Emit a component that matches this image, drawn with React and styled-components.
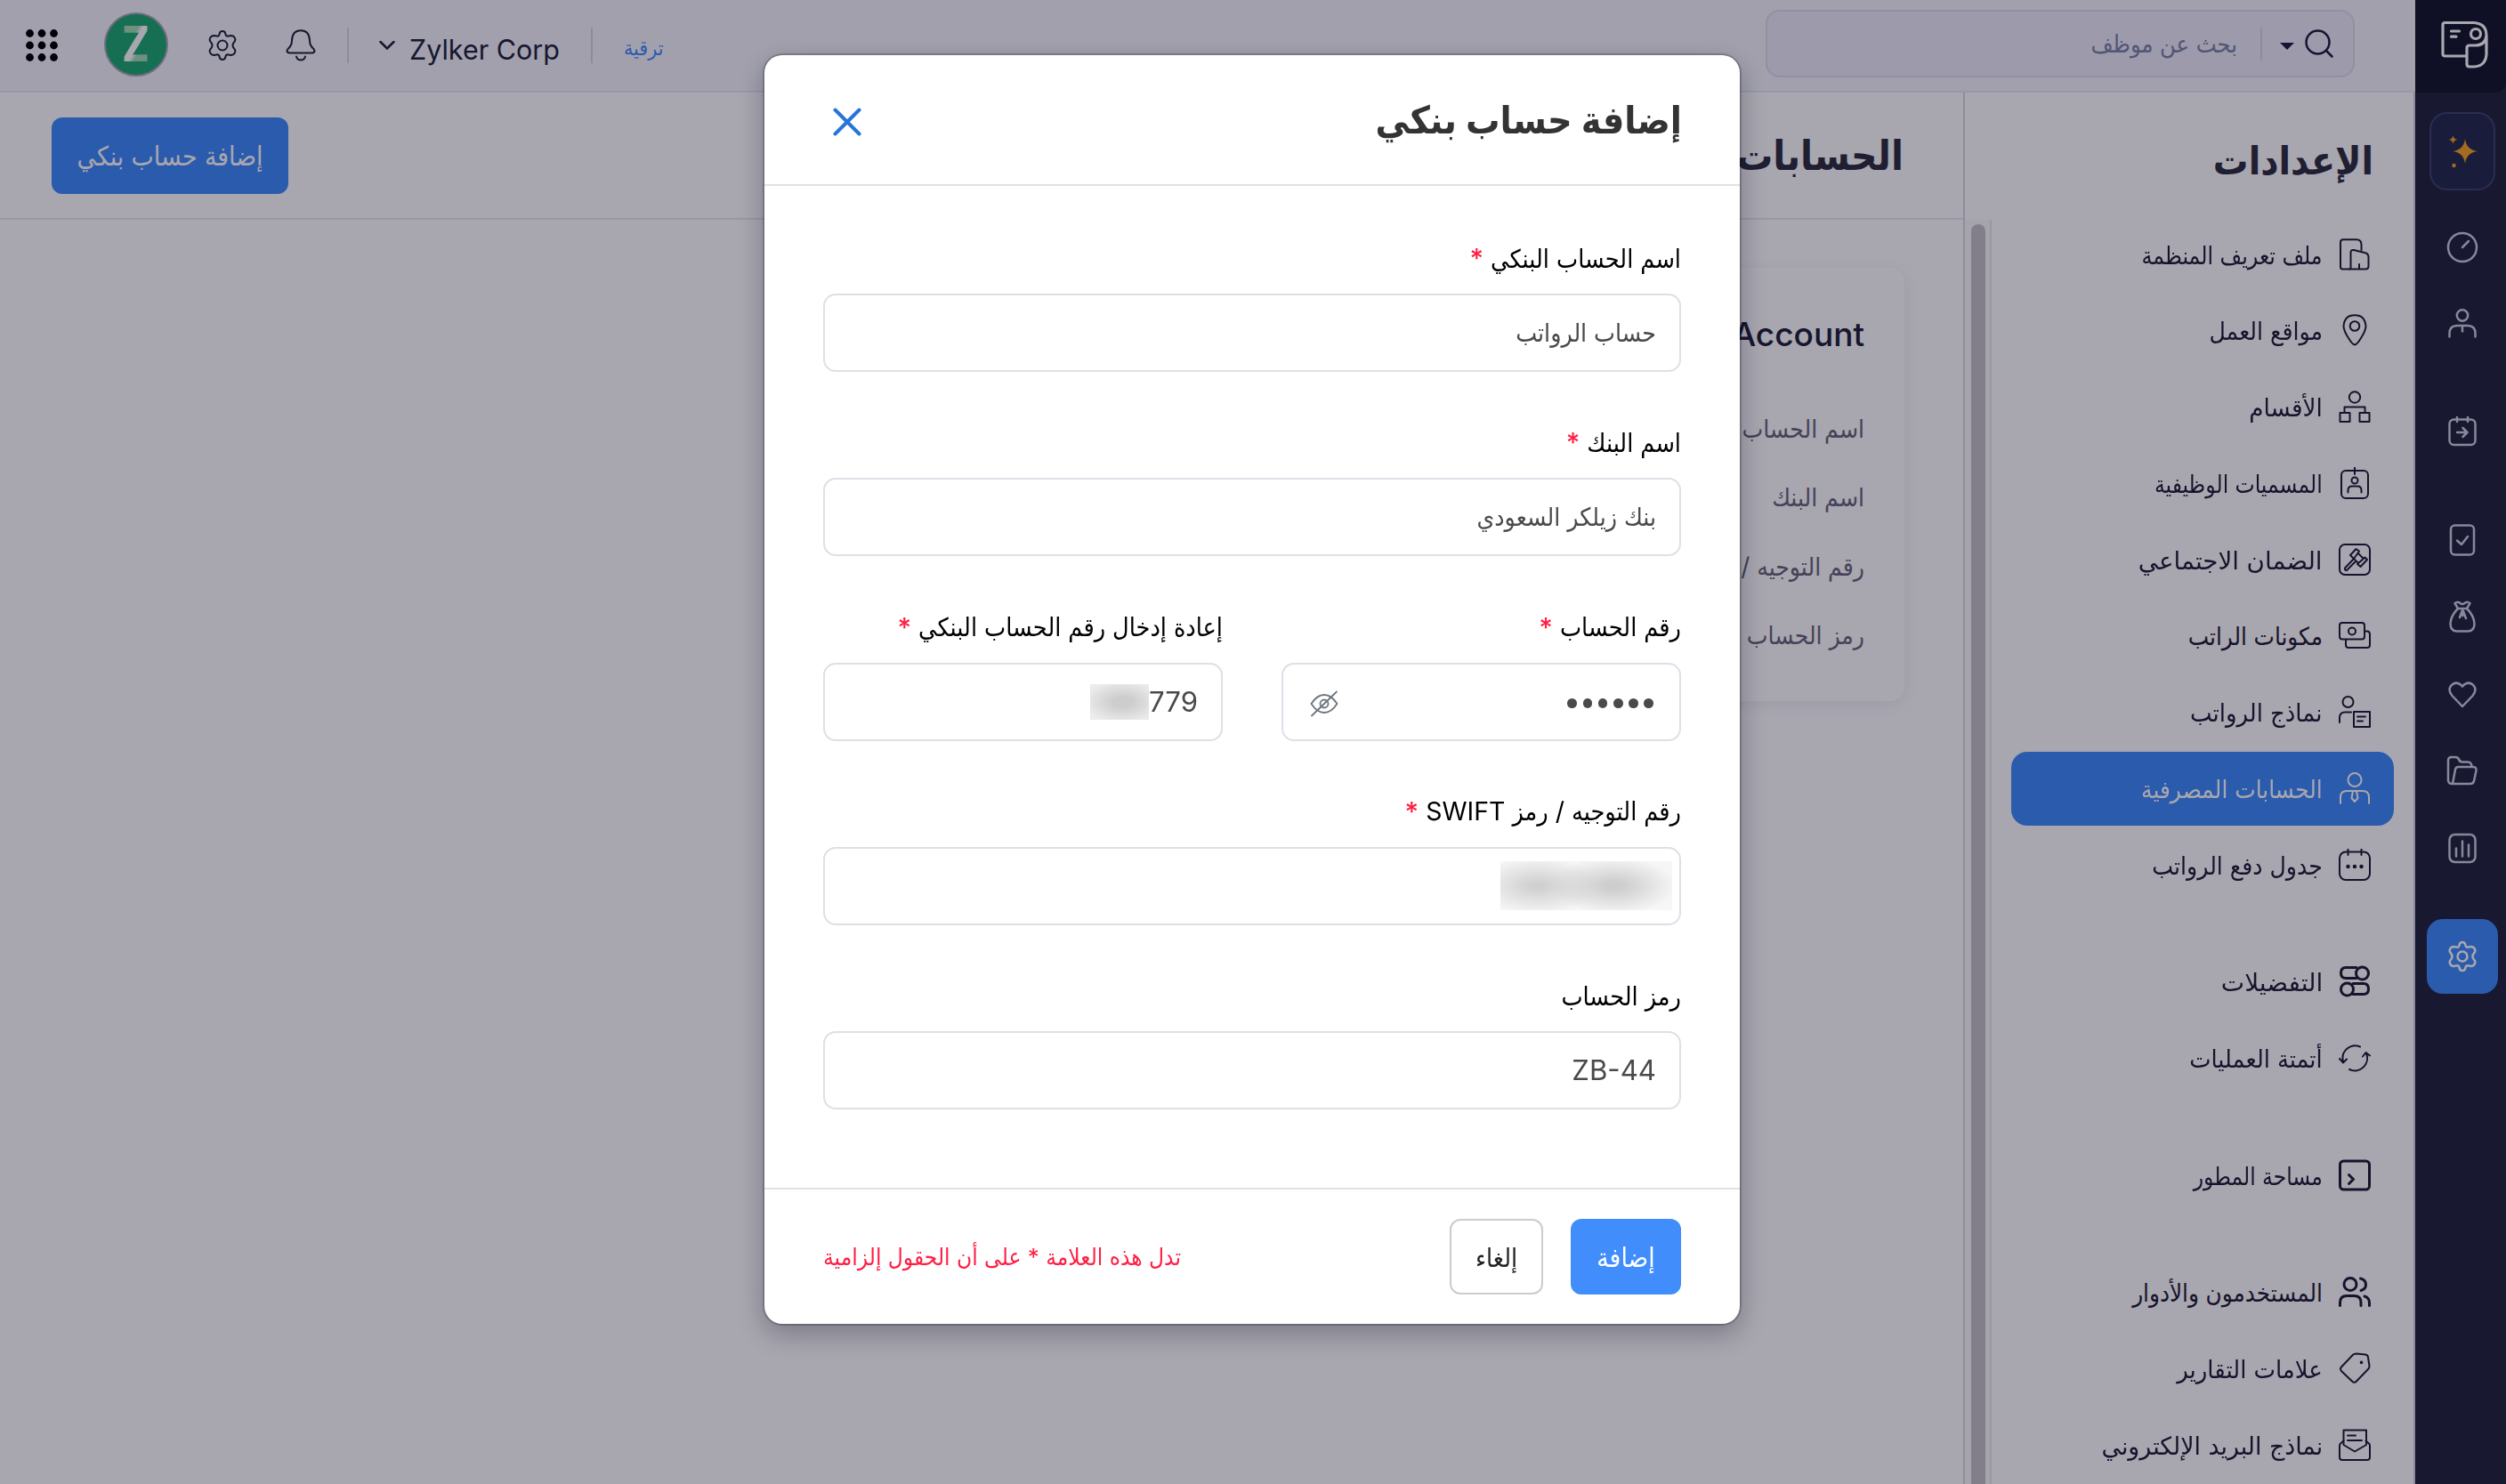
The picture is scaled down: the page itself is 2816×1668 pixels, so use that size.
import styled, { createGlobalStyle, css } from 'styled-components';

const GlobalStyle = createGlobalStyle`
  * { box-sizing: border-box; }
  body {
    margin: 0;
    overflow: hidden;
    font-family: Inter, "DejaVu Sans Condensed", "DejaVu Sans", sans-serif;
    font-size: 26px;
    color: #21232f;
    background: #fff;
  }
  svg { display: block; flex: none; }
`;

const Shell = styled.div`
  display: flex;
  direction: rtl;
  width: 100%;
  height: 1668px;
  overflow: hidden;
`;

/* ---------- dark rail on the right ---------- */

const Rail = styled.nav`
  flex: none;
  width: 102px;
  display: flex;
  flex-direction: column;
  align-items: center;
  background: #22253c;
  color: #cdd2e2;
`;

const RailLogo = styled.div`
  width: 102px;
  height: 104px;
  padding: 23px 18px 0 0;
  background: #151a2c;
  border-bottom-right-radius: 12px;
  color: #fff;
`;

const SparkTile = styled.div`
  display: flex;
  align-items: center;
  justify-content: center;
  width: 74px;
  height: 88px;
  margin: 22px 0 22px 4px;
  border: 2px solid #3f4670;
  border-radius: 20px;
  background: #262b4d;
`;

const RailItem = styled.div`
  display: flex;
  align-items: center;
  justify-content: center;
  width: 80px;
  height: 84px;
  margin-left: 4px;
  margin-top: ${p => p.$gap || 0}px;
  border-radius: 18px;
  ${p => p.$active && css`
    background: #408dfb;
    color: #fff;
  `}
`;

/* ---------- top bar ---------- */

const Main = styled.div`
  flex: 1;
  min-width: 0;
  display: flex;
  flex-direction: column;
`;

const TopBar = styled.header`
  flex: none;
  display: flex;
  justify-content: space-between;
  height: 104px;
  padding: 11px 68px 0 0;
  background: #f6f6fc;
  border-bottom: 2px solid #e8e8f1;
`;

const Search = styled.div`
  display: flex;
  align-items: center;
  width: 662px;
  height: 76px;
  padding-right: 22px;
  border: 2px solid #dddcea;
  border-radius: 16px;
  background: #eeedf9;
  color: #7c84a6;
  font-size: 27px;
`;

const Caret = styled.span`
  margin: 6px 12px 0 20px;
  border: 8px solid transparent;
  border-top: 8px solid #1d2140;
  border-bottom: 0;
`;

const Divider = styled.span`
  width: 2px;
  height: ${p => p.$h || 40}px;
  margin: 0 ${p => p.$r || 0}px 0 ${p => p.$l || 0}px;
  background: #d8d6e3;
`;

const TopTools = styled.div`
  direction: ltr;
  display: flex;
  align-items: center;
  height: 79px;
  padding-left: 29px;
  color: #21263c;
`;

const Avatar = styled.div`
  display: flex;
  align-items: center;
  justify-content: center;
  width: 72px;
  height: 72px;
  margin: -2px 43px 0 52px;
  border: 2px solid #a9a9b4;
  border-radius: 50%;
  background: #1fab70;
`;

const AvatarLetter = styled.span`
  font-size: 55px;
  font-weight: 800;
  line-height: 55px;
  transform: scaleX(0.82);
  color: transparent;
  background: linear-gradient(128deg, #a5ddb6 36%, #ffffff 44%, #ffffff 57%, #a5ddb6 64%);
  background-clip: text;
`;

const Bell = styled.span`
  margin: 0 34px 0 52px;
`;

const OrgName = styled.span`
  width: 168px;
  margin: 10px 36px 0 16px;
  font-size: 30.5px;
  white-space: nowrap;
`;

const Upgrade = styled.a`
  margin: 6px 0 0 35px;
  color: #408dfb;
  font-size: 23px;
`;

/* ---------- settings column ---------- */

const Columns = styled.div`
  flex: 1;
  min-height: 0;
  display: flex;
`;

const Settings = styled.aside`
  flex: none;
  display: flex;
  flex-direction: column;
  width: 508px;
  border-left: 2px solid #dadae3;
  border-right: 2px solid #d4d4de;
`;

const SettingsTitle = styled.h2`
  display: flex;
  align-items: center;
  height: 140px;
  margin: 0;
  padding: 12px 45px 0 0;
  font-size: 44px;
  font-weight: 700;
  color: #2e3040;
`;

const SettingsBody = styled.div`
  flex: 1;
  min-height: 0;
  display: flex;
  justify-content: space-between;
`;

const MenuList = styled.div`
  display: flex;
  flex-direction: column;
  gap: 48.5px;
  width: 430px;
  margin-right: 22px;
`;

const MenuGroup = styled.div`
  display: flex;
  flex-direction: column;
  gap: 2.8px;
  flex: none;
`;

const MenuItem = styled.div`
  display: flex;
  align-items: center;
  gap: 18px;
  height: 83px;
  padding-right: 26px;
  border-radius: 18px;
  font-size: 27.5px;
  white-space: nowrap;
  color: #1f2036;
  ${p => p.$active && css`
    background: #408dfb;
    color: #fff;
  `}
`;

const MenuText = styled.span`
  padding-top: 2px;
  transform: scaleX(${p => p.$stretch});
  transform-origin: right center;
`;

const ScrollTrack = styled.div`
  width: 30px;
  margin-top: 3px;
  padding: 5px 5px 0 7px;
  background: #fafafa;
  border-right: 2px solid #e8e8ec;
`;

const ScrollThumb = styled.div`
  height: 1500px;
  border-radius: 9px;
  background: #c5c4c8;
`;

/* ---------- page content ---------- */

const Content = styled.main`
  flex: 1;
  min-width: 0;
`;

const ContentHeader = styled.div`
  display: flex;
  align-items: center;
  justify-content: space-between;
  height: 143px;
  padding: 0 67px 0 58px;
  border-bottom: 2px solid #e8e8ee;
`;

const PageTitle = styled.h1`
  margin: 0;
  font-size: 45.5px;
  font-weight: 700;
  color: #2e3040;
`;

const BlueButton = styled.button`
  display: flex;
  align-items: center;
  justify-content: center;
  width: ${p => p.$w}px;
  height: ${p => p.$h}px;
  padding: 1px 0 0;
  border: 0;
  border-radius: 12px;
  background: #408dfb;
  color: #fff;
  font-family: inherit;
  font-size: 29.8px;
`;

const Card = styled.section`
  width: 1100px;
  height: 487px;
  margin: 54px 66px 0 0;
  padding: 49px 45px 0 0;
  border-radius: 16px;
  box-shadow: 0 4px 18px rgba(30, 20, 90, 0.08);
`;

const CardTitle = styled.h3`
  margin: 0 0 42px;
  direction: ltr;
  text-align: right;
  font-size: 37px;
  line-height: 52px;
  font-weight: 500;
  color: #21223a;
`;

const CardLabel = styled.div`
  height: 77.3px;
  line-height: 77.3px;
  font-size: 28px;
  color: #68687a;
`;

/* ---------- modal ---------- */

const Overlay = styled.div`
  position: fixed;
  inset: 0;
  display: flex;
  justify-content: center;
  align-items: flex-start;
  padding: 62px 2px 0 0;
  direction: rtl;
  background: rgba(6, 1, 26, 0.35);
`;

const Modal = styled.div`
  width: 1096px;
  height: 1426px;
  display: flex;
  flex-direction: column;
  border-radius: 20px;
  background: #fff;
  box-shadow: 0 0 0 2px rgba(0, 0, 0, 0.2), 0 10px 30px rgba(10, 5, 30, 0.3);
`;

const ModalHeader = styled.div`
  display: flex;
  align-items: center;
  justify-content: space-between;
  height: 147px;
  padding: 0 65px 0 77px;
  border-bottom: 2px solid #dee2e6;
`;

const ModalTitle = styled.h2`
  margin: 0;
  font-size: 42.7px;
  font-weight: 700;
  color: #333;
`;

const CloseButton = styled.span`
  margin-top: 4px;
`;

const ModalBody = styled.div`
  flex: 1;
  display: flex;
  flex-direction: column;
  gap: 59.3px;
  padding: 61px 66px 0;
`;

const FieldRow = styled.div`
  display: grid;
  grid-template-columns: 1fr 1fr;
  gap: 66px;
`;

const FieldBox = styled.div`
  display: flex;
  flex-direction: column;
  gap: 20px;
`;

const Label = styled.label`
  display: flex;
  align-items: center;
  gap: 8px;
  height: 40px;
  font-size: 28.5px;
  color: #000;
  white-space: nowrap;
`;

const Star = styled.span`
  color: #ff1f44;
  font-size: 30px;
  font-weight: 500;
`;

const Input = styled.div`
  display: flex;
  align-items: center;
  height: 88px;
  padding: 0 26px;
  border: 2px solid #dfdfe7;
  border-radius: 14px;
  color: #4a4a4a;
  font-size: ${p => (p.$latin ? 31.2 : 28.2)}px;
`;

const Dots = styled.div`
  display: flex;
  gap: 6.6px;
  margin: 4px 3px 0 auto;
  span {
    width: 10.6px;
    height: 10.6px;
    border-radius: 50%;
    background: #4a4a4a;
  }
`;

const EyeToggle = styled.span`
  margin: 4px 0 0 4px;
`;

const Redacted = styled.span`
  width: ${p => p.$w}px;
  height: ${p => p.$h}px;
  margin-right: ${p => p.$mr || 0}px;
  background: ${p => p.$bg};
`;

const ModalFooter = styled.div`
  display: flex;
  align-items: center;
  gap: 31px;
  height: 153px;
  padding: 0 66px 0 66px;
  border-top: 2px solid #dee2e6;
`;

const CancelButton = styled.button`
  width: 105px;
  height: 85px;
  padding: 1px 0 0;
  border: 2px solid #ccc;
  border-radius: 12px;
  background: #fff;
  color: #222;
  font-family: inherit;
  font-size: 28.5px;
`;

const RequiredNote = styled.span`
  margin-right: auto;
  color: #ff1f44;
  font-size: 26.1px;
`;

/* ---------- icons ---------- */

const GEAR = 'M14.6 5.2 Q15 2 18 2 Q21 2 21.4 5.2 Q22 8 24.6 7.6 L27.5 7 Q30.5 7 31.8 9.6 Q33.2 12.4 31 14.4 Q28 18 31 21.6 Q33.2 23.6 31.8 26.4 Q30.5 29 27.5 29 L24.6 28.4 Q22 28 21.4 30.8 Q21 34 18 34 Q15 34 14.6 30.8 Q14 28 11.4 28.4 L8.5 29 Q5.5 29 4.2 26.4 Q2.8 23.6 5 21.6 Q8 18 5 14.4 Q2.8 12.4 4.2 9.6 Q5.5 7 8.5 7 L11.4 7.6 Q14 8 14.6 5.2Z';

const icons = {
  gear: <><path d={GEAR} /><circle cx="18" cy="18" r="5.5" /></>,
  bell: <><path d="M5 26.5 Q1 25.5 3.500 22 Q8 18.500 8 12.5 Q8.500 1.200 18 1.200 Q27.500 1.200 28 12.5 Q28 18.500 32.500 22 Q35 25.500 31 26.500Z" /><path d="M13 30.500 Q14 34.500 18 34.500 Q22 34.500 23 30.500" /></>,
  gauge: <><circle cx="18" cy="18" r="16" /><path d="M18 18 L25 11" /></>,
  person: <><circle cx="18" cy="9.500" r="6.200" /><path d="M3.500 33.500 V30 Q3.500 21 12 21 H24 Q32.500 21 32.500 30 V33.500 M18 21 V27.500" /></>,
  calArrow: <><rect x="3.500" y="4.500" width="29" height="28.500" rx="5" /><path d="M12 2 V7 M24 2 V7 M12 19 H23 M18.500 14 L23.500 19 L18.500 24" /></>,
  check: <><rect x="5" y="1.500" width="26" height="33" rx="4.500" /><path d="M12 18.500 L17 23 L24 14" /></>,
  bag: <><path d="M13 9 L9.500 3 Q13 0.500 15.500 3 Q18 5 20.500 3 Q23 0.500 26.500 3 L23 9Z" /><path d="M13 9 Q5 17 4.500 26 Q4.500 34.500 12 34.500 H24 Q31.500 34.500 31.500 26 Q31 17 23 9 M17.500 12 L15 19 M19 12 L22 20 M18.200 10 V17" /></>,
  heart: <path d="M18 32 L6.500 20 Q1.500 14 5 9 Q10 3 16 7.500 L18 9.500 L20 7.500 Q26 3 31 9 Q34.500 14 29.500 20Z" />,
  folder: <><path d="M7 33 Q2 33 2 29 V7 Q2 3 6 3 H10 Q13 3 14 5.500 Q15 8.500 18 8.500 H24 Q28.500 8.500 28.500 14" /><path d="M7 33 H27 Q30 33 31 30 L33.500 18 Q34 14 30 14 H13.500 Q10.500 14 10 17 L7 33Z" /></>,
  chart: <><rect x="3.500" y="3" width="29" height="31" rx="6" /><path d="M11 18.500 V27.500 M18 10.500 V27.500 M25 14.500 V27.500" /></>,
  org: <><path d="M12 34.500 H4.500 Q2 34.500 2 32 V4 Q2 1.200 5 1.200 H20 Q25.500 1.200 25.500 7 V13" /><path d="M13.500 34.500 V16 Q13.500 12.500 17 13 L29 16 Q33.500 17 33.500 21 V31 Q33.500 34.500 30 34.500 H12 M23 34.500 V29" /></>,
  pin: <><path d="M18 34.500 Q15.500 34.500 11 27 Q5.500 18.500 5.500 13.500 Q6.500 1.200 18 1.200 Q29.500 1.200 30.500 13.500 Q30.500 18.500 25 27 Q20.500 34.500 18 34.500Z" /><circle cx="18" cy="13.500" r="5.300" /></>,
  tree: <><circle cx="18" cy="7.500" r="6.200" /><path d="M6.500 25 V18.500 H29.500 V25" /><rect x="1.500" y="25" width="11" height="10" /><rect x="23.500" y="25" width="11" height="10" /></>,
  badge: <><rect x="3" y="4" width="30" height="31" rx="5" /><path d="M18 0.500 V8" /><circle cx="18" cy="15" r="3.500" /><path d="M10.500 28.500 V26 Q10.500 21.500 15 21.500 H21 Q25.500 21.500 25.500 26 V28.500" /></>,
  gavel: <><rect x="1" y="1" width="34" height="34" rx="6" /><path d="M7 27.500 L17 17 L19.500 19.500 L9 30 Q6.500 30.500 7 27.500Z M13 13 L19.500 6 L23 8.500 L17 17Z M21 23 L29.500 15.500 L32 18 L24.500 26Z M21.500 10.500 L27.500 16.500 M17 17 L22 22" /></>,
  money: <><rect x="1" y="4" width="28" height="18.500" rx="3" /><circle cx="15" cy="13.500" r="4" /><path d="M30 13.500 H32 Q35 13.500 35 17 V29 Q35 32 32 32 H11 Q8 32 8 29 V23" /></>,
  payTpl: <><circle cx="10.500" cy="7" r="6" /><path d="M1 30 V25 Q1 18.500 7 18.500 H14" /><rect x="17" y="18" width="18" height="17" /><path d="M21 23.500 H30 M21 28.500 H27" /></>,
  tie: <><circle cx="18" cy="8.500" r="7.500" /><path d="M2 35 V28 Q2 21 9 21 H27 Q34 21 34 28 V35 M16 21 L14.500 29 L18 33 L21.500 29 L20 21" /></>,
  calDots: <><rect x="1" y="3.500" width="34" height="31.500" rx="7" /><path d="M10.500 0.500 V7 M25.500 0.500 V7" /><path d="M10.500 20 V20.100 M18 20 V20.100 M25.500 20 V20.100" strokeWidth="4.500" /></>,
  toggles: <><path d="M20 2.500 H8 Q2.500 2.500 2.500 8.500 Q2.500 14.500 8 14.500 H20" /><circle cx="26.500" cy="9" r="7" /><path d="M16 20.500 H28 Q33.500 20.500 33.500 26.500 Q33.500 32.500 28 32.500 H16" /><circle cx="9.500" cy="27" r="7" /></>,
  sync: <><path d="M24 5.500 A14 14 0 0 0 5 22 M1 19 L5 23.500 L9 19.500 M12 31 A14 14 0 0 0 31 13 M27 16.500 L30.500 12 L35 15.500" /></>,
  dev: <><rect x="1.500" y="2" width="33" height="32" rx="4" /><path d="M11.500 17.500 L16.500 22.500 L11.500 27.500" /></>,
  users: <><circle cx="13" cy="9.500" r="7" /><path d="M1.500 33.500 V30 Q1.500 22.500 9 22.500 H17.500 Q25 22.500 25 30 V33.500 M24.500 3 Q30.500 4.500 30.500 10 Q30.500 15 25 16.500 M29 23 Q34.500 24.500 34.500 30.500 V33.500" /></>,
  tag: <><path d="M16 2.800 Q17.500 1.500 20 1.500 L30 2.500 Q32.800 3 33 5.500 L34.500 15.500 Q34.500 17.500 33 19 L20 32.500 Q17.500 35 15 32.500 L3 21 Q1 18.500 3 16.500Z" /><path d="M25.500 11.200 V11.400" strokeWidth="3.500" /></>,
  mail: <><path d="M5.500 13.500 L2 16.500 Q1 17.500 1 19 V32 Q1 35 4 35 H32 Q35 35 35 32 V19 Q35 17.500 34 16.500 L30.500 13.500" /><path d="M5.500 18 V1.500 H31 V18 L18 25.500Z M10 7.500 H19 M10 13 H26" /></>,
};

function Icon({ name, size = 36, sw = 2 }) {
  return (
    <svg width={size} height={size} viewBox="0 0 36 36" fill="none" stroke="currentColor"
      strokeWidth={sw} strokeLinecap="round" strokeLinejoin="round">
      {icons[name]}
    </svg>
  );
}

const railItems = [
  { icon: 'gauge' },
  { icon: 'person', gap: 1 },
  { icon: 'calArrow', gap: 38 },
  { icon: 'check', gap: 38 },
  { icon: 'bag', gap: 2 },
  { icon: 'heart', gap: 3 },
  { icon: 'folder', gap: 2 },
  { icon: 'chart', gap: 3 },
  { icon: 'gear', gap: 38, active: true },
];

const menu = [
  [
    { icon: 'org', text: 'ملف تعريف المنظمة', stretch: 0.96 },
    { icon: 'pin', text: 'مواقع العمل', stretch: 1.02 },
    { icon: 'tree', text: 'الأقسام', stretch: 1.06 },
    { icon: 'badge', text: 'المسميات الوظيفية', stretch: 0.95 },
    { icon: 'gavel', text: 'الضمان الاجتماعي', stretch: 1.12 },
    { icon: 'money', text: 'مكونات الراتب' },
    { icon: 'payTpl', text: 'نماذج الرواتب', stretch: 1.05 },
    { icon: 'tie', text: 'الحسابات المصرفية', active: true, stretch: 1.01 },
    { icon: 'calDots', text: 'جدول دفع الرواتب', stretch: 1.02 },
  ],
  [
    { icon: 'toggles', text: 'التفضيلات', stretch: 1.13, sw: 3 },
    { icon: 'sync', text: 'أتمتة العمليات', stretch: 1.04 },
  ],
  [{ icon: 'dev', text: 'مساحة المطور', stretch: 0.95, sw: 3 }],
  [
    { icon: 'users', text: 'المستخدمون والأدوار', stretch: 1, sw: 3 },
    { icon: 'tag', text: 'علامات التقارير', stretch: 1.05 },
    { icon: 'mail', text: 'نماذج البريد الإلكتروني', stretch: 1.085 },
  ],
];

function Field({ label, required, latin, children }) {
  return (
    <FieldBox>
      <Label>{label}{required && <Star>*</Star>}</Label>
      <Input $latin={latin}>{children}</Input>
    </FieldBox>
  );
}

function App() {
  return (
    <>
      <GlobalStyle />
      <Shell>
        <Rail>
          <RailLogo>
            <svg width="56" height="56" viewBox="0 0 56 56" fill="none" stroke="currentColor" strokeWidth="3.200" strokeLinejoin="round" strokeLinecap="round">
              <path d="M30 40 H5.500 Q3 40 3 37.500 V5 Q3 2.500 5.500 2.500 H38 Q52 3.500 52 17 Q51 27.500 40 28 H33 Q30 28 30 31 V49 Q30 52 33 52 H38 Q51 51.500 52 38 V17" />
              <circle cx="40" cy="15" r="5.500" />
              <path d="M12.500 12 H21.500 M12.500 18.200 H18" />
            </svg>
          </RailLogo>
          <SparkTile>
            <svg width="38" height="40" viewBox="0 0 38 40" fill="#f5a623">
              <path d="M22 6 Q23.500 18.500 36 20 Q23.500 21.500 22 34 Q20.500 21.500 8 20 Q20.500 18.500 22 6Z" />
              <path d="M8.500 2 Q9 6.500 13.500 7 Q9 7.500 8.500 12 Q8 7.500 3.500 7 Q8 6.500 8.500 2Z" />
              <circle cx="9.500" cy="36" r="2.200" />
            </svg>
          </SparkTile>
          {railItems.map(item => (
            <RailItem key={item.icon} $gap={item.gap} $active={item.active}>
              <Icon name={item.icon} sw={2.5} />
            </RailItem>
          ))}
        </Rail>

        <Main>
          <TopBar>
            <Search>
              <svg width="32" height="32" viewBox="0 0 32 32" fill="none" stroke="#1d2140" strokeWidth="2.500" strokeLinecap="round">
                <circle cx="14.500" cy="14.500" r="13" />
                <path d="M24 24 L30.500 30.500" />
              </svg>
              <Caret />
              <Divider $h={37} $l={26} />
              بحث عن موظف
            </Search>
            <TopTools>
              <svg width="36" height="36" viewBox="0 0 36 36" fill="#000">
                {[4.5, 18, 31.5].map(y => [4.5, 18, 31.5].map(x => (
                  <circle key={`${x}-${y}`} cx={x} cy={y} r="4.400" />
                )))}
              </svg>
              <Avatar><AvatarLetter>Z</AvatarLetter></Avatar>
              <Icon name="gear" />
              <Bell><Icon name="bell" /></Bell>
              <Divider $r={34} />
              <svg width="18" height="10" viewBox="0 0 18 10" fill="none" stroke="currentColor" strokeWidth="2.500" strokeLinecap="round">
                <path d="M1.500 1 L9 8.500 L16.500 1" />
              </svg>
              <OrgName>Zylker Corp</OrgName>
              <Divider />
              <Upgrade>ترقية</Upgrade>
            </TopTools>
          </TopBar>

          <Columns>
            <Settings>
              <SettingsTitle>الإعدادات</SettingsTitle>
              <SettingsBody>
                <MenuList>
                  {menu.map((group, i) => (
                    <MenuGroup key={i}>
                      {group.map(({ icon, text, active, sw, stretch = 1 }) => (
                        <MenuItem key={icon} $active={active}>
                          <Icon name={icon} sw={sw} />
                          <MenuText $stretch={stretch}>{text}</MenuText>
                        </MenuItem>
                      ))}
                    </MenuGroup>
                  ))}
                </MenuList>
                <ScrollTrack><ScrollThumb /></ScrollTrack>
              </SettingsBody>
            </Settings>

            <Content>
              <ContentHeader>
                <PageTitle>الحسابات</PageTitle>
                <BlueButton $w={266} $h={86}>إضافة حساب بنكي</BlueButton>
              </ContentHeader>
              <Card>
                <CardTitle>Account</CardTitle>
                <CardLabel>اسم الحساب</CardLabel>
                <CardLabel>اسم البنك</CardLabel>
                <CardLabel>رقم التوجيه /</CardLabel>
                <CardLabel>رمز الحساب</CardLabel>
              </Card>
            </Content>
          </Columns>
        </Main>
      </Shell>

      <Overlay>
        <Modal>
          <ModalHeader>
            <ModalTitle>إضافة حساب بنكي</ModalTitle>
            <CloseButton>
              <svg width="32" height="32" viewBox="0 0 32 32" fill="none" stroke="#2775d9" strokeWidth="4" strokeLinecap="round">
                <path d="M2.500 2.500 L29.500 29.500 M29.500 2.500 L2.500 29.500" />
              </svg>
            </CloseButton>
          </ModalHeader>
          <ModalBody>
            <Field label="اسم الحساب البنكي" required>حساب الرواتب</Field>
            <Field label="اسم البنك" required>بنك زيلكر السعودي</Field>
            <FieldRow>
              <Field label="رقم الحساب" required>
                <Dots>{[...Array(6)].map((_, i) => <span key={i} />)}</Dots>
                <EyeToggle>
                  <svg width="32" height="30" viewBox="0 0 32 30" fill="none" stroke="#6c757d" strokeWidth="1.800" strokeLinecap="round">
                    <path d="M1.500 15 Q8 5 16 5 Q24 5 30.500 15 Q24 25 16 25 Q8 25 1.500 15Z M2 28.500 L30 1.500" />
                    <circle cx="16" cy="15" r="4.500" />
                  </svg>
                </EyeToggle>
              </Field>
              <Field label="إعادة إدخال رقم الحساب البنكي" required latin>
                779
                <Redacted $w={66} $h={40} $bg="radial-gradient(ellipse at 55% 50%, #cdcdcd 20%, #ececec 85%)" />
              </Field>
            </FieldRow>
            <Field label="رقم التوجيه / رمز SWIFT" required>
              <Redacted $w={193} $h={55} $mr={-18} $bg="radial-gradient(ellipse 70px 32px at 66% 50%, #cecece 15%, transparent 100%), radial-gradient(ellipse 70px 32px at 22% 50%, #d0d0d0 10%, transparent 100%), #f6f6f6" />
            </Field>
            <Field label="رمز الحساب" latin>ZB-44</Field>
          </ModalBody>
          <ModalFooter>
            <BlueButton $w={124} $h={85}>إضافة</BlueButton>
            <CancelButton>إلغاء</CancelButton>
            <RequiredNote>تدل هذه العلامة * على أن الحقول إلزامية</RequiredNote>
          </ModalFooter>
        </Modal>
      </Overlay>
    </>
  );
}

export default App;
